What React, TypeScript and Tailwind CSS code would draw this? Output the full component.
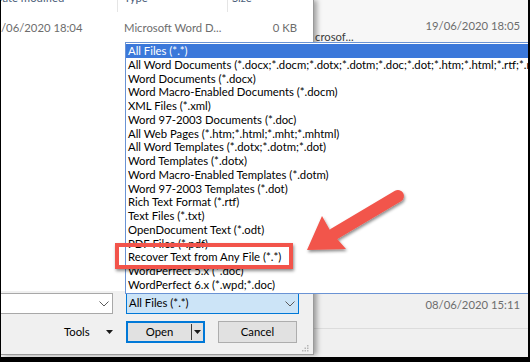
import React from "react";

const fileTypes = [
  "All Files (*.*)",
  "All Word Documents (*.docx;*.docm;*.dotx;*.dotm;*.doc;*.dot;*.htm;*.html;*.rtf;*.mht;*.mhtml;*.xml;*.odt;*.pdf)",
  "Word Documents (*.docx)",
  "Word Macro-Enabled Documents (*.docm)",
  "XML Files (*.xml)",
  "Word 97-2003 Documents (*.doc)",
  "All Web Pages (*.htm;*.html;*.mht;*.mhtml)",
  "All Word Templates (*.dotx;*.dotm;*.dot)",
  "Word Templates (*.dotx)",
  "Word Macro-Enabled Templates (*.dotm)",
  "Word 97-2003 Templates (*.dot)",
  "Rich Text Format (*.rtf)",
  "Text Files (*.txt)",
  "OpenDocument Text (*.odt)",
  "PDF Files (*.pdf)",
  "Recover Text from Any File (*.*)",
  "WordPerfect 5.x (*.doc)",
  "WordPerfect 6.x (*.wpd;*.doc)",
];

function Chevron() {
  return (
    <svg width="10" height="6" viewBox="0 0 10 6" className="shrink-0">
      <polyline points="0.5,0.5 5,5 9.5,0.5" fill="none" stroke="#5a5a5a" strokeWidth="1" />
    </svg>
  );
}

function DownTriangle() {
  return (
    <svg width="7" height="4" viewBox="0 0 7 4" className="shrink-0">
      <polygon points="0,0 7,0 3.5,4" fill="#1a1a1a" />
    </svg>
  );
}

export default function App() {
  return (
    <div
      className="relative w-[530px] h-[362px] overflow-hidden bg-black text-[11.3px]"
      style={{ fontFamily: "Lato, 'Liberation Sans', sans-serif" }}
    >
      <div className="relative ml-[1px] w-[527px] h-[357px] overflow-hidden bg-[#f0f0f0]">
        {/* window behind the dialog */}
        <div className="flex h-full flex-col pl-[313px]">
          <div className="relative h-[292px] bg-[#f7f7f7]">
            <div className="flex justify-end pr-[8px] pt-[19px] leading-[14px] text-[#6d6d6d]">19/06/2020 18:05</div>
            <div className="-mt-[3px] pl-[1px] leading-[14px] text-[#3c3c3c]">crosof...</div>
          </div>
          <div className="flex h-[37px] justify-end border-b border-[#dcdcdc] pr-[8px] pt-[6px] leading-[14px] text-[#6d6d6d]">
            08/06/2020 15:11
          </div>
        </div>

        {/* Open dialog */}
        <div className="absolute left-0 top-0 flex h-[355px] w-[313px] flex-col border-r border-b border-[#9a9a9a] shadow-[3px_0_5px_rgba(0,0,0,0.35)]">
          <div className="h-[291px] bg-white">
            <div className="flex h-[12px] overflow-hidden leading-[14px] text-[#4c607a]">
              <div className="-mt-[9px] w-[117px] shrink-0 overflow-hidden border-r border-[#e5e5e5] whitespace-nowrap">
                <span className="-ml-[7px] inline-block">Date modified</span>
              </div>
              <div className="-mt-[9px] w-[110px] shrink-0 border-r border-[#e5e5e5] pl-[6px]">Type</div>
              <div className="-mt-[9px] pl-[4px]">Size</div>
            </div>
            <div className="mt-[9px] flex leading-[14px] text-[#6d6d6d]">
              <div className="w-[117px] shrink-0 overflow-hidden whitespace-nowrap">/06/2020 18:04</div>
              <div className="w-[110px] shrink-0 pl-[6px] whitespace-nowrap">Microsoft Word D...</div>
              <div className="w-[69px] text-right">0 KB</div>
            </div>
          </div>

          <div className="flex flex-1 flex-col bg-[#f0f0f0] pt-[2px]">
            <div className="flex items-center gap-[13px]">
              <div className="flex h-[21px] w-[112px] items-center justify-end border border-l-0 border-[#a8a8a8] bg-white pr-[3px]">
                <Chevron />
              </div>
              <div className="flex h-[21px] w-[173px] items-center justify-between border border-[#0078d7] bg-[#cce4f7] pl-[2px] pr-[3px] text-black">
                <span>All Files (*.*)</span>
                <Chevron />
              </div>
            </div>
            <div className="mt-[7px] flex items-center">
              <div className="flex w-[125px] items-center pl-[63px] text-black">
                <span>Tools</span>
                <span className="ml-[16px] flex"><DownTriangle /></span>
              </div>
              <div className="flex h-[22px] w-[79px] items-center border-2 border-[#0078d7] bg-[#e1e1e1] text-black">
                <span className="flex-1 text-center">Open</span>
                <span className="h-[16px] w-px bg-[#3a3a3a]" />
                <span className="flex w-[11px] justify-center"><DownTriangle /></span>
              </div>
              <div className="ml-[13px] flex h-[22px] w-[79px] items-center justify-center border border-[#adadad] bg-[#e1e1e1] text-black">
                Cancel
              </div>
            </div>
            <div className="mt-auto flex justify-end pb-[2px] pr-[4px]">
              <svg width="7" height="7" viewBox="0 0 7 7">
                <rect x="5" y="0" width="1.5" height="1.5" fill="#b5b5b5" />
                <rect x="2.5" y="2.5" width="1.5" height="1.5" fill="#b5b5b5" />
                <rect x="5" y="2.5" width="1.5" height="1.5" fill="#b5b5b5" />
                <rect x="0" y="5" width="1.5" height="1.5" fill="#b5b5b5" />
                <rect x="2.5" y="5" width="1.5" height="1.5" fill="#b5b5b5" />
                <rect x="5" y="5" width="1.5" height="1.5" fill="#b5b5b5" />
              </svg>
            </div>
          </div>
        </div>

        {/* file type dropdown list */}
        <div className="absolute left-[124px] top-[42px] h-[252px] w-[410px] overflow-hidden border border-[#6a93d4] bg-white pt-px">
          {fileTypes.map((t, i) => (
            <div
              key={t}
              className={
                i === 0
                  ? "h-[13.75px] whitespace-nowrap bg-[#3b78da] pl-[2px] leading-[13.75px] text-white"
                  : "h-[13.75px] whitespace-nowrap pl-[2px] leading-[13.75px] text-black"
              }
            >
              {t}
            </div>
          ))}
        </div>
      </div>

      {/* annotation: red box */}
      <div className="absolute left-[115px] top-[243px] h-[26px] w-[178px] border-4 border-[#f2544b] shadow-[1px_2px_3px_rgba(0,0,0,0.45)]" />

      {/* annotation: arrow */}
      <svg className="pointer-events-none absolute left-0 top-0" width="530" height="362" viewBox="0 0 530 362">
        <defs>
          <filter id="sh" x="-20%" y="-20%" width="140%" height="140%">
            <feDropShadow dx="1" dy="2" stdDeviation="1.5" floodColor="#000" floodOpacity="0.45" />
          </filter>
        </defs>
        <g filter="url(#sh)" fill="#f2544b">
          <line x1="398" y1="196" x2="334" y2="234" stroke="#f2544b" strokeWidth="12" strokeLinecap="round" />
          <polygon points="307,250 322,216 331,232 346,249" />
        </g>
      </svg>
    </div>
  );
}
